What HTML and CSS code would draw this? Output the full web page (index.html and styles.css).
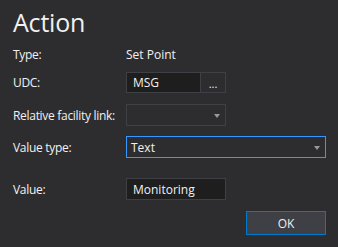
FILE: index.html
```html
<!DOCTYPE html>
<html lang="en">
<head>
  <meta charset="UTF-8" />
  <title>Action</title>
  <link rel="stylesheet" href="styles.css">
</head>
<body>
  <div class="dialog">
    <h1 class="title">Action</h1>

    <div class="row row-type">
      <span class="label">Type:</span>
      <span class="value-text">Set Point</span>
    </div>

    <div class="row row-udc">
      <span class="label">UDC:</span>
      <div class="udc">
        <div class="textbox udc-box">MSG</div>
        <div class="browse">...</div>
      </div>
    </div>

    <div class="row row-link">
      <span class="label">Relative facility link:</span>
      <div class="combo combo-small">
        <span class="combo-text"></span>
        <span class="arrow"></span>
      </div>
    </div>

    <div class="row row-vtype">
      <span class="label">Value type:</span>
      <div class="combo combo-wide focused">
        <span class="combo-text">Text</span>
        <span class="arrow"></span>
      </div>
    </div>

    <div class="row row-value">
      <span class="label">Value:</span>
      <div class="textbox value-box">Monitoring</div>
    </div>

    <div class="footer">
      <button class="ok">OK</button>
    </div>
  </div>
</body>
</html>
```

FILE: styles.css
```css
* {
  margin: 0;
  padding: 0;
  box-sizing: border-box;
}
html, body {
  width: 100%;
  height: 100%;
  overflow: hidden;
  background-color: #2d2d30;
  font-family: "Open Sans", sans-serif;
  font-size: 12px;
  color: #f1f1f1;
}
.dialog {
  padding: 6px 12px 0 13px;
}
.title {
  font-size: 25px;
  font-weight: normal;
  line-height: 32px;
  height: 38px;
  letter-spacing: -0.2px;
}
.row {
  display: flex;
  align-items: center;
}
.label {
  width: 113px;
  flex-shrink: 0;
  letter-spacing: -0.3px;
}
.row-type {
  height: 20px;
}
.row-udc {
  margin-top: 8px;
  height: 21px;
}
.row-link {
  margin-top: 11px;
  height: 22px;
}
.row-vtype {
  margin-top: 10px;
  height: 22px;
}
.row-value {
  margin-top: 20px;
  height: 22px;
}
.udc {
  display: flex;
  height: 21px;
}
.textbox {
  background-color: #1e1e1e;
  border: 1px solid #3f3f46;
  height: 100%;
  padding-left: 6px;
  display: flex;
  align-items: center;
  font-size: 12px;
}
.udc-box {
  width: 75px;
}
.browse {
  width: 25px;
  height: 100%;
  border: 1px solid #3f3f46;
  border-left: none;
  display: flex;
  align-items: flex-end;
  justify-content: center;
  padding-bottom: 2px;
  font-size: 11px;
  line-height: 12px;
}
.value-box {
  width: 100px;
}
.combo {
  height: 100%;
  border: 1px solid #3f3f46;
  display: flex;
  align-items: center;
  justify-content: space-between;
  padding: 0 5px 0 4px;
  font-size: 12px;
}
.combo-small {
  width: 100px;
}
.combo-wide {
  width: 200px;
}
.focused {
  border-color: #3399ff;
}
.arrow {
  width: 0;
  height: 0;
  border-left: 3.5px solid transparent;
  border-right: 3.5px solid transparent;
  border-top: 4px solid #999999;
  margin-top: 1px;
}
.footer {
  display: flex;
  justify-content: flex-end;
  margin-top: 11px;
}
.ok {
  width: 80px;
  height: 24px;
  background-color: #3f3f46;
  border: 1px solid #007acc;
  color: #f1f1f1;
  font-family: "Open Sans", sans-serif;
  font-size: 12px;
}
```
